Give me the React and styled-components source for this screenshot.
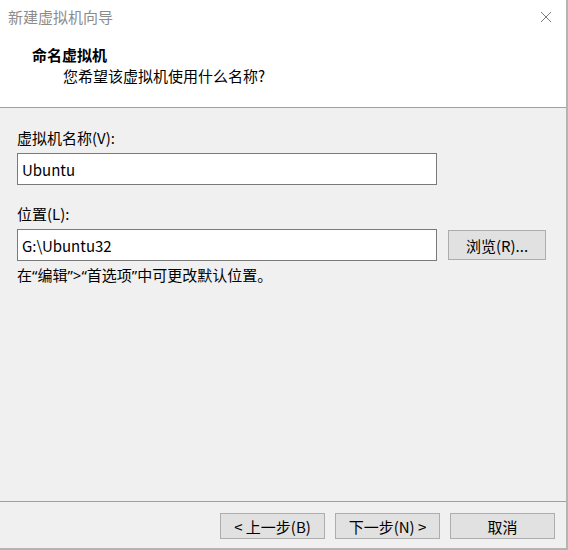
import React, { useState } from 'react';
import styled, { createGlobalStyle } from 'styled-components';

const GlobalStyle = createGlobalStyle`
  html, body {
    margin: 0;
    padding: 0;
    background: #f0f0f0;
  }
  * {
    box-sizing: border-box;
  }
`;

const FONT = `"Noto Sans CJK SC", "Noto Sans", sans-serif`;

const Window = styled.div`
  width: 568px;
  height: 550px;
  display: flex;
  flex-direction: column;
  background: #f0f0f0;
  border-right: 2px solid #b4b4b4;
  border-bottom: 2px solid #b4b4b4;
  font-family: ${FONT};
  font-size: 15px;
  color: #000;
  overflow: hidden;
`;

const Header = styled.div`
  background: #ffffff;
  border-bottom: 1px solid #a0a0a0;
  padding-bottom: 21px;
`;

const TitleBar = styled.div`
  height: 34px;
  display: flex;
  align-items: center;
  justify-content: space-between;
  padding: 0 5px 0 8px;
`;

const TitleText = styled.span`
  color: #8c8c8c;
  font-size: 15px;
  line-height: 20px;
`;

const CloseButton = styled.button`
  border: none;
  background: transparent;
  width: 30px;
  height: 30px;
  padding: 0;
  display: flex;
  align-items: center;
  justify-content: center;
  cursor: pointer;
`;

const Heading = styled.div`
  margin-top: 11px;
  padding-left: 32px;
  font-weight: 700;
  font-size: 15px;
  line-height: 20px;
`;

const SubHeading = styled.div`
  padding-left: 63px;
  font-size: 15px;
  line-height: 20px;
  margin-top: 1px;
`;

const Body = styled.div`
  flex: 1;
  padding: 20px 0 0 17px;
  display: flex;
  flex-direction: column;
`;

const Label = styled.label`
  display: block;
  line-height: 20px;
  margin-top: ${(p) => p.$top || 0}px;
`;

const FieldRow = styled.div`
  display: flex;
  align-items: center;
  gap: 11px;
  margin-top: 5px;
`;

const TextInput = styled.input`
  width: 420px;
  height: 32px;
  border: 1px solid #7a7a7a;
  background: #fff;
  padding: 0 4px;
  font-family: ${FONT};
  font-size: 15px;
  color: #000;
  outline: none;
`;

const Button = styled.button`
  width: ${(p) => p.$width || 105}px;
  height: ${(p) => p.$height || 26}px;
  background: #e1e1e1;
  border: 1px solid #adadad;
  font-family: ${FONT};
  font-size: 15px;
  color: #000;
  padding: 0;
  line-height: 1;
  cursor: pointer;
`;

const Hint = styled.div`
  margin-top: 4px;
  line-height: 20px;
`;

const Quote = styled.span`
  font-family: "Noto Sans", sans-serif;
`;

const Footer = styled.div`
  height: 47px;
  border-top: 1px solid #a0a0a0;
  display: flex;
  justify-content: flex-end;
  align-items: flex-start;
  gap: 10px;
  padding: 11px 11px 0 0;
`;

const CloseIcon = () => (
  <svg width="12" height="12" viewBox="0 0 12 12">
    <path d="M1 1L11 11M11 1L1 11" stroke="#7a7a7a" strokeWidth="1" fill="none" />
  </svg>
);

export default function App() {
  const [name, setName] = useState('Ubuntu');
  const [location, setLocation] = useState('G:\\Ubuntu32');

  return (
    <>
      <GlobalStyle />
      <Window>
        <Header>
          <TitleBar>
            <TitleText>新建虚拟机向导</TitleText>
            <CloseButton aria-label="关闭">
              <CloseIcon />
            </CloseButton>
          </TitleBar>
          <Heading>命名虚拟机</Heading>
          <SubHeading>您希望该虚拟机使用什么名称?</SubHeading>
        </Header>

        <Body>
          <Label>虚拟机名称(V):</Label>
          <FieldRow>
            <TextInput value={name} onChange={(e) => setName(e.target.value)} />
          </FieldRow>

          <Label $top={19}>位置(L):</Label>
          <FieldRow>
            <TextInput value={location} onChange={(e) => setLocation(e.target.value)} />
            <Button $width={98} $height={30}>浏览(R)...</Button>
          </FieldRow>
          <Hint>
            在<Quote>“</Quote>编辑<Quote>”&gt;“</Quote>首选项<Quote>”</Quote>中可更改默认位置。
          </Hint>
        </Body>

        <Footer>
          <Button>&lt; 上一步(B)</Button>
          <Button>下一步(N) &gt;</Button>
          <Button>取消</Button>
        </Footer>
      </Window>
    </>
  );
}
